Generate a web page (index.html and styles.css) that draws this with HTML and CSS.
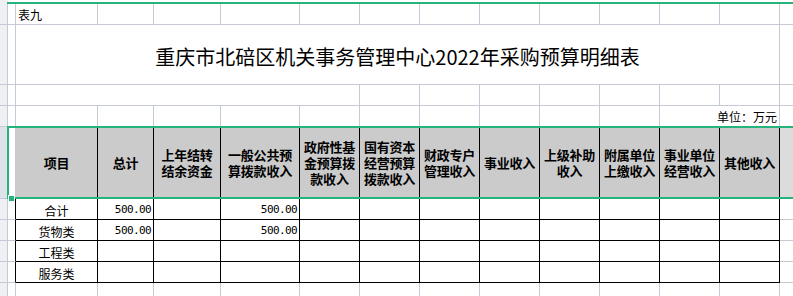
FILE: index.html
```html
<!DOCTYPE html>
<html lang="zh-CN">
<head>
<meta charset="utf-8">
<title>采购预算明细表</title>
<link rel="stylesheet" href="styles.css">
</head>
<body>
<div class="sheet">
  <!-- top strip -->
  <div class="rh"></div>
  <div class="strip"></div>

  <!-- row 1 -->
  <div class="c rh"></div>
  <div class="c"></div>
  <div class="c label">表九</div>
  <div class="c"></div><div class="c"></div><div class="c"></div><div class="c"></div>
  <div class="c"></div><div class="c"></div><div class="c"></div><div class="c"></div>
  <div class="c"></div><div class="c"></div><div class="c"></div><div class="c"></div>

  <!-- row 2: title -->
  <div class="c rh"></div>
  <div class="c"></div>
  <div class="c title">重庆市北碚区机关事务管理中心2022年采购预算明细表</div>
  <div class="c"></div>

  <!-- row 3 -->
  <div class="c rh"></div>
  <div class="c"></div>
  <div class="c span-bf"></div>
  <div class="c"></div><div class="c"></div><div class="c"></div><div class="c"></div>
  <div class="c"></div><div class="c"></div><div class="c"></div><div class="c"></div>

  <!-- row 4: unit -->
  <div class="c rh"></div>
  <div class="c"></div>
  <div class="c"></div><div class="c"></div><div class="c"></div><div class="c"></div><div class="c"></div>
  <div class="c"></div><div class="c"></div><div class="c"></div><div class="c"></div><div class="c"></div>
  <div class="c unit">单位：万元</div>
  <div class="c"></div>

  <!-- header row -->
  <div class="c rh sel"></div>
  <div class="c"></div>
  <div class="hd edge-l">项目</div>
  <div class="hd">总计</div>
  <div class="hd">上年结转<br>结余资金</div>
  <div class="hd">一般公共预<br>算拨款收入</div>
  <div class="hd">政府性基<br>金预算拨<br>款收入</div>
  <div class="hd">国有资本<br>经营预算<br>拨款收入</div>
  <div class="hd">财政专户<br>管理收入</div>
  <div class="hd">事业收入</div>
  <div class="hd">上级补助<br>收入</div>
  <div class="hd">附属单位<br>上缴收入</div>
  <div class="hd">事业单位<br>经营收入</div>
  <div class="hd">其他收入</div>
  <div class="c hd-out"></div>

  <!-- data rows -->
  <div class="c rh"></div>
  <div class="c edge"></div>
  <div class="td name">合计</div>
  <div class="td num">500.00</div>
  <div class="td"></div>
  <div class="td num">500.00</div>
  <div class="td"></div><div class="td"></div><div class="td"></div><div class="td"></div>
  <div class="td"></div><div class="td"></div><div class="td"></div><div class="td"></div>
  <div class="c"></div>

  <div class="c rh"></div>
  <div class="c edge"></div>
  <div class="td name">货物类</div>
  <div class="td num">500.00</div>
  <div class="td"></div>
  <div class="td num">500.00</div>
  <div class="td"></div><div class="td"></div><div class="td"></div><div class="td"></div>
  <div class="td"></div><div class="td"></div><div class="td"></div><div class="td"></div>
  <div class="c"></div>

  <div class="c rh"></div>
  <div class="c edge"></div>
  <div class="td name">工程类</div>
  <div class="td"></div><div class="td"></div><div class="td"></div>
  <div class="td"></div><div class="td"></div><div class="td"></div><div class="td"></div>
  <div class="td"></div><div class="td"></div><div class="td"></div><div class="td"></div>
  <div class="c"></div>

  <div class="c rh"></div>
  <div class="c edge"></div>
  <div class="td name">服务类</div>
  <div class="td"></div><div class="td"></div><div class="td"></div>
  <div class="td"></div><div class="td"></div><div class="td"></div><div class="td"></div>
  <div class="td"></div><div class="td"></div><div class="td"></div><div class="td"></div>
  <div class="c"></div>

  <!-- empty row below -->
  <div class="c rh"></div>
  <div class="c"></div>
  <div class="c"></div><div class="c"></div><div class="c"></div><div class="c"></div><div class="c"></div>
  <div class="c"></div><div class="c"></div><div class="c"></div><div class="c"></div><div class="c"></div>
  <div class="c"></div><div class="c"></div><div class="c"></div>

  <!-- selection overlays -->
  <div class="sel-top"></div>
  <div class="sel-box"></div>
  <div class="sel-handle"></div>
</div>
</body>
</html>
```

FILE: styles.css
```css
html, body {
  margin: 0;
  padding: 0;
  background: #ffffff;
  overflow: hidden;
}

.sheet {
  --grid: #c6cad7;
  --green: #25b47c;
  position: relative;
  display: grid;
  grid-template-columns: 8px 8px 82px 56px 67px 79px repeat(8, 60px) 60px;
  grid-template-rows: 4px 21px 60px 21px 21px 72px 21px 21px 21px 21px 21px;
  width: 840px;
  font-family: "Noto Sans CJK SC", "DejaVu Sans", sans-serif;
  font-size: 12px;
  color: #000;
}

.strip {
  grid-column: 2 / -1;
}

.c {
  box-sizing: border-box;
  border-right: 1px solid var(--grid);
  border-bottom: 1px solid var(--grid);
  display: flex;
  white-space: nowrap;
  line-height: 16px;
}

.rh {
  background: #eef0f4;
}

.rh.sel {
  background: #dfe2e8;
}

.label {
  align-items: flex-end;
  padding: 0 0 1px 2px;
}

.title {
  grid-column: 3 / 15;
  justify-content: center;
  align-items: center;
  font-size: 20px;
  line-height: 28px;
  padding-top: 4px;
}

.span-bf {
  grid-column: 3 / 8;
}

.unit {
  grid-column: 13 / 15;
  justify-content: flex-end;
  align-items: flex-end;
  padding: 0 2px 1px 0;
}

.hd {
  box-sizing: border-box;
  background: #cbcbcb;
  border-top: 1px solid #000;
  border-right: 1px solid #000;
  border-bottom: 1px solid #000;
  display: flex;
  align-items: center;
  justify-content: center;
  text-align: center;
  font-weight: bold;
  font-size: 13px;
  line-height: 16px;
  letter-spacing: -0.2px;
  white-space: nowrap;
}

.hd-out {
  background: #dcdcdc;
}

.edge {
  border-right-color: #000;
}

.td {
  box-sizing: border-box;
  border-right: 1px solid #000;
  border-bottom: 1px solid #000;
  display: flex;
  align-items: flex-end;
  white-space: nowrap;
  line-height: 17px;
}

.name {
  justify-content: center;
}

.num {
  justify-content: flex-end;
  padding-right: 2px;
  padding-bottom: 2px;
  font-family: "DejaVu Sans Mono", "Liberation Mono", monospace;
  font-size: 11px;
  letter-spacing: -0.6px;
  line-height: 14px;
}

.sel-top {
  position: absolute;
  left: 7px;
  top: 2px;
  right: 0;
  height: 2px;
  background: var(--green);
}

.sel-box {
  position: absolute;
  left: 7px;
  top: 126px;
  right: 0;
  height: 73px;
  box-sizing: border-box;
  border: 2px solid var(--green);
  border-right: none;
}

.sel-handle {
  position: absolute;
  left: 9px;
  top: 196px;
  width: 5px;
  height: 5px;
  background: var(--green);
  box-shadow: 0 0 0 1px #fff;
}
```
